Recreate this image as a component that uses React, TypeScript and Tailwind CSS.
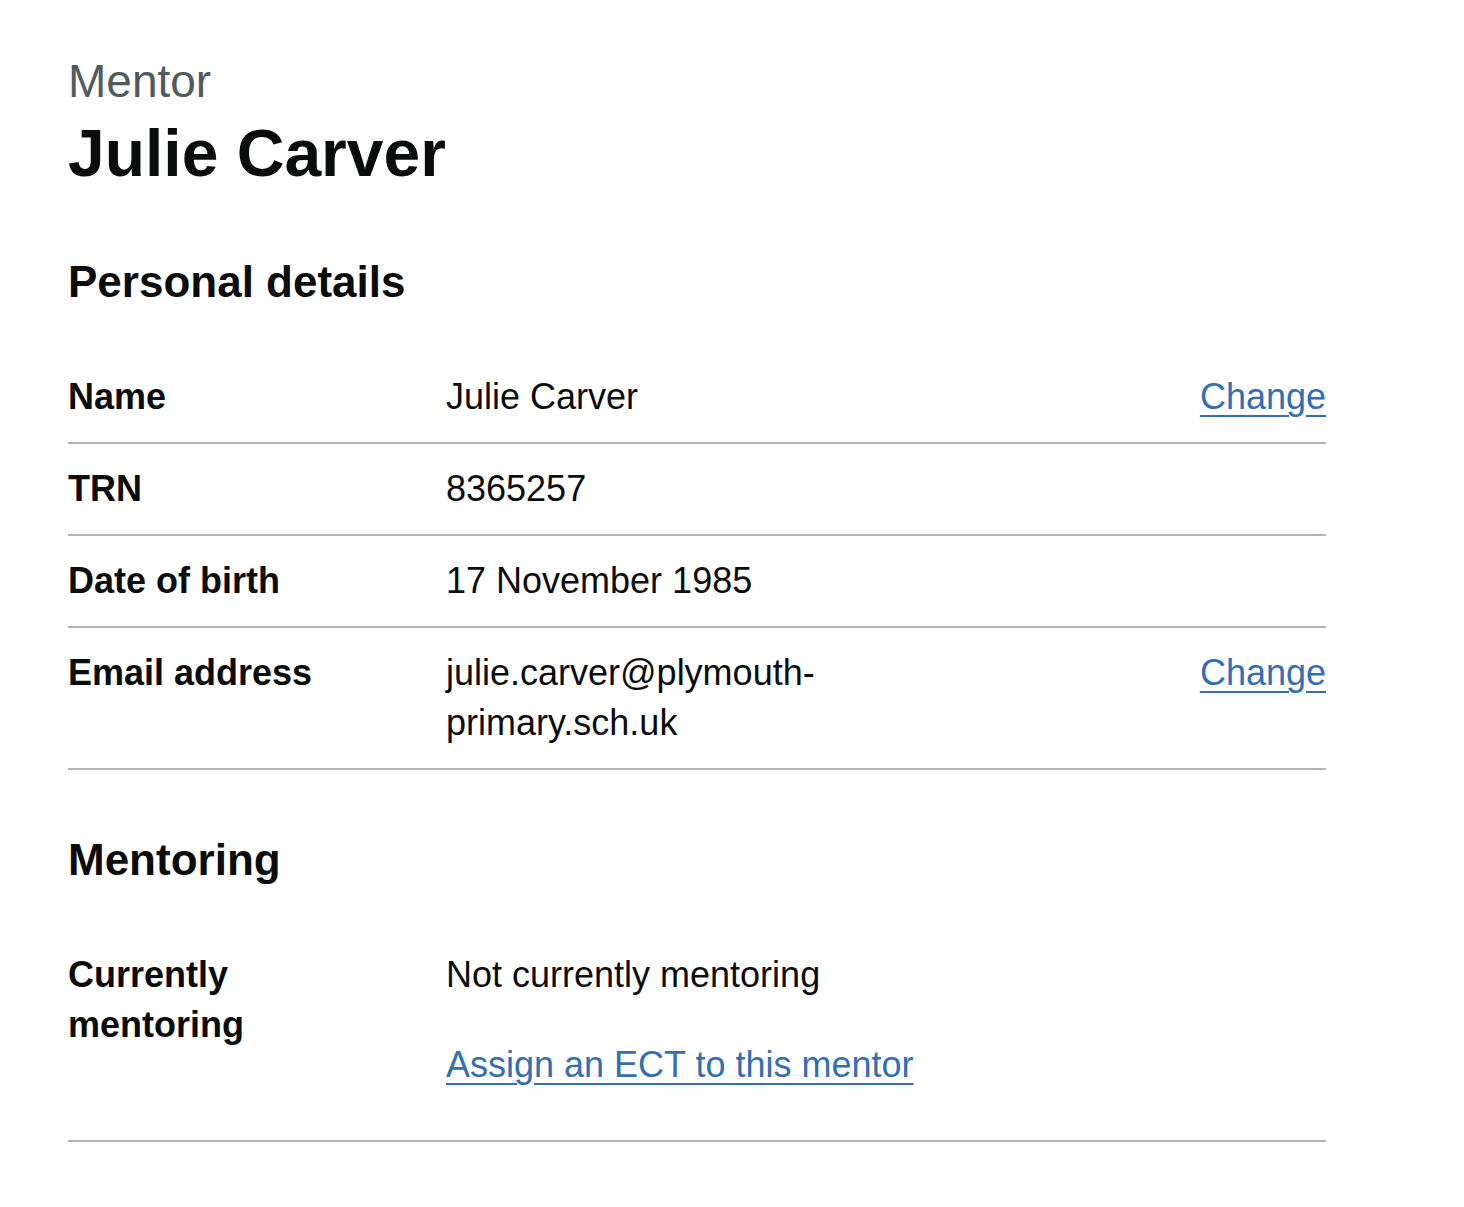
type Row = {
  label: string
  value: React.ReactNode
  action?: string
}

const personalRows: Row[] = [
  { label: 'Name', value: 'Julie Carver', action: 'Change' },
  { label: 'TRN', value: '8365257' },
  { label: 'Date of birth', value: '17 November 1985' },
  { label: 'Email address', value: 'julie.carver@plymouth-primary.sch.uk', action: 'Change' },
]

const linkClass =
  'text-[#336eb4] underline decoration-[2px] underline-offset-[6px] hover:decoration-[3px]'

function SummaryRow({ row, last }: { row: Row; last?: boolean }) {
  return (
    <div className="grid grid-cols-[378px_1fr_252px] border-b-2 border-[#b1b4b6]">
      <dt className={`pt-5 pr-[48px] font-bold ${last ? 'pb-[50px]' : 'pb-5'}`}>{row.label}</dt>
      <dd className={`pt-5 pr-[40px] ${last ? 'pb-[50px]' : 'pb-5'}`}>{row.value}</dd>
      <dd className="pt-5 pb-5 text-right">
        {row.action && (
          <a href="#" className={linkClass}>
            {row.action}
          </a>
        )}
      </dd>
    </div>
  )
}

export default function App() {
  return (
    <main className="min-h-screen bg-white px-[68px] pt-[55px] pb-16 font-['Liberation_Sans',Arial,sans-serif] text-[#0b0c0c]">
      <div className="w-[1258px]">
        <span className="block text-[46px] leading-[52px] text-[#505a5f]">Mentor</span>
        <h1 className="mt-[10px] text-[66px] leading-[72px] font-bold">Julie Carver</h1>

        <h2 className="mt-[68px] text-[44px] leading-[50px] font-bold">Personal details</h2>
        <dl className="mt-[45px] text-[36px] leading-[50px]">
          {personalRows.map((row) => (
            <SummaryRow key={row.label} row={row} />
          ))}
        </dl>

        <h2 className="mt-[65px] text-[44px] leading-[50px] font-bold">Mentoring</h2>
        <dl className="mt-[45px] text-[36px] leading-[50px]">
          <SummaryRow
            last
            row={{
              label: 'Currently mentoring',
              value: (
                <>
                  <p className="mb-[40px]">Not currently mentoring</p>
                  <p>
                    <a href="#" className={linkClass}>
                      Assign an ECT to this mentor
                    </a>
                  </p>
                </>
              ),
            }}
          />
        </dl>
      </div>
    </main>
  )
}
